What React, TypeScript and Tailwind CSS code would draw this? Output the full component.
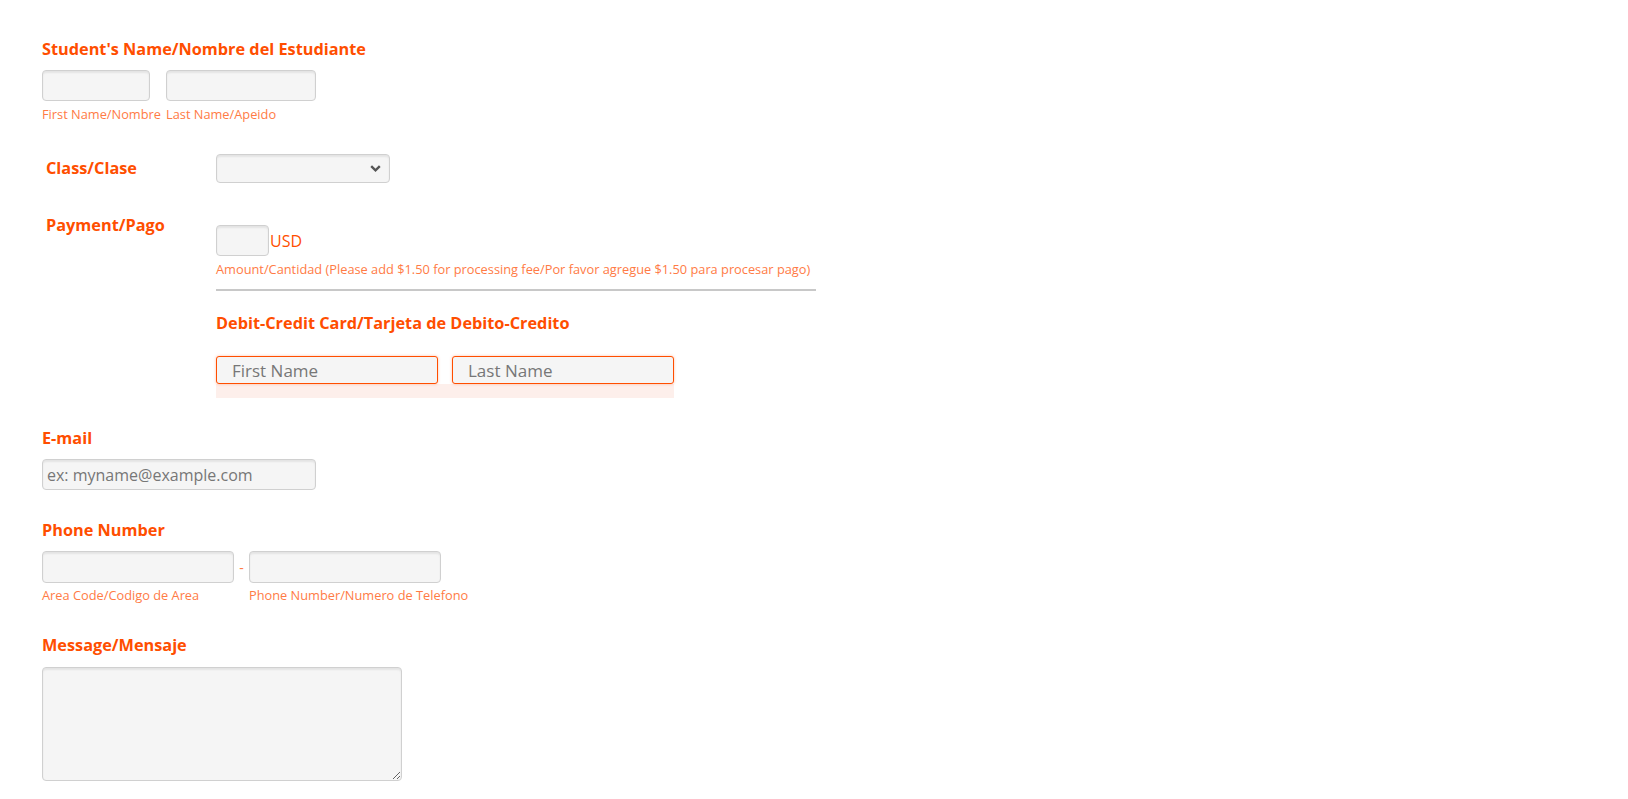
import type { ReactNode } from 'react'

const font = { fontFamily: '"Open Sans", "Liberation Sans", sans-serif' }

function Label({ children, className = '' }: { children: ReactNode; className?: string }) {
  return <div className={`text-[16.3px] leading-[20px] font-bold text-[#ff4e00] whitespace-nowrap ${className}`}>{children}</div>
}

function Sub({ children, className = '' }: { children: ReactNode; className?: string }) {
  return <div className={`text-[12.8px] leading-[16px] text-[#ff7b45] whitespace-nowrap ${className}`}>{children}</div>
}

const field =
  'bg-[#f5f5f5] border border-[#d0d0d0] rounded-[4px] shadow-[inset_0_2px_2px_rgba(0,0,0,0.07)] outline-none text-[16px] text-[#555] placeholder:text-[#777]'

const cardField =
  'w-[222px] h-[28px] block bg-[#f5f5f5] border border-[#ff4e00] rounded-[3px] shadow-[0_0_3px_rgba(255,78,0,0.35)] outline-none pl-[15px] text-[17px] text-[#555] placeholder:text-[#777]'

export default function App() {
  return (
    <div style={font} className="min-h-screen bg-white pl-[42px] pt-[39px] pb-[19px]">
      {/* student name */}
      <Label>Student's Name/Nombre del Estudiante</Label>
      <div className="mt-[11px] flex">
        <div className="w-[124px]">
          <input className={`${field} w-[108px] h-[31px] block`} />
          <Sub className="mt-[5px]">First Name/Nombre</Sub>
        </div>
        <div>
          <input className={`${field} w-[150px] h-[31px] block`} />
          <Sub className="mt-[5px]">Last Name/Apeido</Sub>
        </div>
      </div>

      {/* class */}
      <div className="mt-[32px] flex">
        <Label className="w-[170px] ml-[4px] pt-[4px]">Class/Clase</Label>
        <div className="relative w-[174px] h-[29px]">
          <select className={`${field} w-full h-full appearance-none pl-2`}>
            <option></option>
          </select>
          <svg className="absolute right-[9px] top-[11px] pointer-events-none" width="11" height="7" viewBox="0 0 11 7">
            <path d="M1.2 1.2 L5.5 5.3 L9.8 1.2" fill="none" stroke="#555" strokeWidth="2.4" />
          </svg>
        </div>
      </div>

      {/* payment */}
      <div className="mt-[32px] flex">
        <Label className="w-[170px] ml-[4px]">Payment/Pago</Label>
        <div className="pt-[10px]">
          <div className="flex items-center">
            <input className={`${field} w-[53px] h-[31px] block`} />
            <span className="ml-[1px] text-[16px] leading-[22px] text-[#ff4e00]">USD</span>
          </div>
          <Sub className="mt-[5px]">
            Amount/Cantidad (Please add $1.50 for processing fee/Por favor agregue $1.50 para procesar pago)
          </Sub>
          <div className="mt-[12px] w-[600px] h-[2px] bg-[#c8c8c8]" />
          <Label className="mt-[22px]">Debit-Credit Card/Tarjeta de Debito-Credito</Label>
          <div className="mt-[23px] w-[458px]">
            <div className="flex gap-[14px]">
              <input placeholder="First Name" className={cardField} />
              <input placeholder="Last Name" className={cardField} />
            </div>
            <div className="h-[14px] bg-[#fdefeb]" />
          </div>
        </div>
      </div>

      {/* email */}
      <Label className="mt-[30px]">E-mail</Label>
      <input
        placeholder="ex: myname@example.com"
        className={`${field} mt-[11px] w-[274px] h-[31px] block pl-[4px]`}
      />

      {/* phone */}
      <Label className="mt-[30px]">Phone Number</Label>
      <div className="mt-[11px] flex">
        <div>
          <input className={`${field} w-[192px] h-[32px] block`} />
          <Sub className="mt-[4px]">Area Code/Codigo de Area</Sub>
        </div>
        <div className="w-[15px] h-[32px] flex items-center justify-center text-[14px] text-[#ff7b45]">-</div>
        <div>
          <input className={`${field} w-[192px] h-[32px] block`} />
          <Sub className="mt-[4px]">Phone Number/Numero de Telefono</Sub>
        </div>
      </div>

      {/* message */}
      <Label className="mt-[32px]">Message/Mensaje</Label>
      <textarea className={`${field} mt-[12px] w-[360px] h-[114px] block`} />
    </div>
  )
}
